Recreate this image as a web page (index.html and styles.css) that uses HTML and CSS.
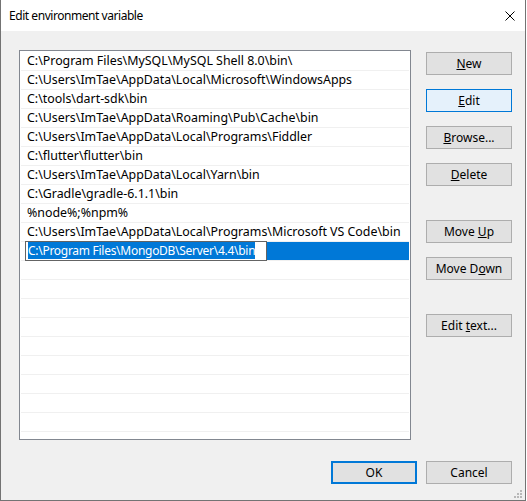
FILE: index.html
```html
<!DOCTYPE html>
<html>
<head>
<meta charset="utf-8">
<link rel="stylesheet" href="styles.css">
</head>
<body>
<div class="window">
  <div class="titlebar">
    <span class="title">Edit environment variable</span>
    <svg class="close" width="10" height="10" viewBox="0 0 10 10"><path d="M0.5 0.5 L9.5 9.5 M9.5 0.5 L0.5 9.5" stroke="#000" stroke-width="1" fill="none"/></svg>
  </div>
  <div class="content">
    <div class="main">
      <div class="list">
        <div class="row">C:\Program Files\MySQL\MySQL Shell 8.0\bin\</div>
        <div class="row">C:\Users\ImTae\AppData\Local\Microsoft\WindowsApps</div>
        <div class="row">C:\tools\dart-sdk\bin</div>
        <div class="row">C:\Users\ImTae\AppData\Roaming\Pub\Cache\bin</div>
        <div class="row">C:\Users\ImTae\AppData\Local\Programs\Fiddler</div>
        <div class="row">C:\flutter\flutter\bin</div>
        <div class="row">C:\Users\ImTae\AppData\Local\Yarn\bin</div>
        <div class="row">C:\Gradle\gradle-6.1.1\bin</div>
        <div class="row">%node%;%npm%</div>
        <div class="row">C:\Users\ImTae\AppData\Local\Programs\Microsoft VS Code\bin</div>
        <div class="row selected"><span class="editbox"><span class="seltext">C:\Program Files\MongoDB\Server\4.4\bin</span></span></div>
        <div class="row"></div>
        <div class="row"></div>
        <div class="row"></div>
        <div class="row"></div>
        <div class="row"></div>
        <div class="row"></div>
        <div class="row"></div>
        <div class="row"></div>
        <div class="row"></div>
      </div>
      <div class="buttons">
        <button class="btn"><u>N</u>ew</button>
        <button class="btn hover"><u>E</u>dit</button>
        <button class="btn"><u>B</u>rowse...</button>
        <button class="btn"><u>D</u>elete</button>
        <button class="btn group">Move <u>U</u>p</button>
        <button class="btn">Move D<u>o</u>wn</button>
        <button class="btn group">Edit <u>t</u>ext...</button>
      </div>
    </div>
    <div class="footer">
      <button class="btn default">OK</button>
      <button class="btn">Cancel</button>
    </div>
  </div>
  <svg class="grip" width="10" height="10" viewBox="0 0 10 10">
    <rect x="7" y="1" width="2" height="2" fill="#b8b8b8"/>
    <rect x="4" y="4" width="2" height="2" fill="#b8b8b8"/>
    <rect x="7" y="4" width="2" height="2" fill="#b8b8b8"/>
    <rect x="1" y="7" width="2" height="2" fill="#b8b8b8"/>
    <rect x="4" y="7" width="2" height="2" fill="#b8b8b8"/>
    <rect x="7" y="7" width="2" height="2" fill="#b8b8b8"/>
  </svg>
</div>
</body>
</html>
```
FILE: styles.css
```css
html, body {
  margin: 0;
  padding: 0;
  background: #ffffff;
}
body {
  font-family: "Noto Sans", "Open Sans", sans-serif;
  font-size: 12px;
  color: #000;
}
.window {
  position: relative;
  width: 526px;
  height: 501px;
  box-sizing: border-box;
  border: 1px solid #737373;
  border-top: none;
  background: #f0f0f0;
  display: flex;
  flex-direction: column;
}
.titlebar {
  height: 31px;
  background: #ffffff;
  display: flex;
  align-items: center;
  justify-content: space-between;
  padding: 0 9px 0 8px;
  flex: none;
}
.title {
  line-height: 31px;
  font-size: 12px;
  letter-spacing: -0.45px;
}
.close {
  display: block;
  margin-right: 1px;
}
.content {
  flex: 1;
  padding: 19px 13px 16px 18px;
  display: flex;
  flex-direction: column;
}
.main {
  display: flex;
  gap: 15px;
}
.list {
  width: 392px;
  height: 390px;
  box-sizing: border-box;
  border: 1px solid #828790;
  background: #fff;
  padding: 1px 1px 0 1px;
  overflow: hidden;
  font-size: 12.4px;
}
.row {
  height: 18px;
  line-height: 18px;
  border-bottom: 1px solid #f0f0f0;
  padding-left: 6px;
  white-space: nowrap;
}
.row.selected {
  background: #0078d7;
  background-clip: content-box;
  padding-left: 4px;
}
.editbox {
  display: inline-block;
  box-sizing: border-box;
  height: 20px;
  width: 242px;
  margin-top: -1px;
  border: 1px solid #646464;
  background: #fff;
  padding-left: 2px;
  vertical-align: top;
  line-height: 18px;
  overflow: hidden;
}
.seltext {
  background: #0078d7;
  color: #fff;
  font-size: 12px;
  letter-spacing: -0.28px;
}
.buttons {
  display: flex;
  flex-direction: column;
  gap: 14px;
  padding-top: 2px;
  width: 86px;
}
.btn {
  width: 86px;
  height: 23px;
  box-sizing: border-box;
  border: 1px solid #adadad;
  background: #e1e1e1;
  font-family: "Noto Sans", "Open Sans", sans-serif;
  font-size: 12px;
  color: #000;
  padding: 0;
  margin: 0;
  line-height: 20px;
  text-align: center;
}
.btn.group {
  margin-top: 20px;
}
.btn.hover {
  background: #e5f1fb;
  border-color: #0078d7;
}
.btn.default {
  border: 2px solid #0078d7;
}
.footer {
  display: flex;
  justify-content: flex-end;
  gap: 9px;
  margin-top: 21px;
}
.grip {
  position: absolute;
  right: 2px;
  bottom: 1px;
}
```
